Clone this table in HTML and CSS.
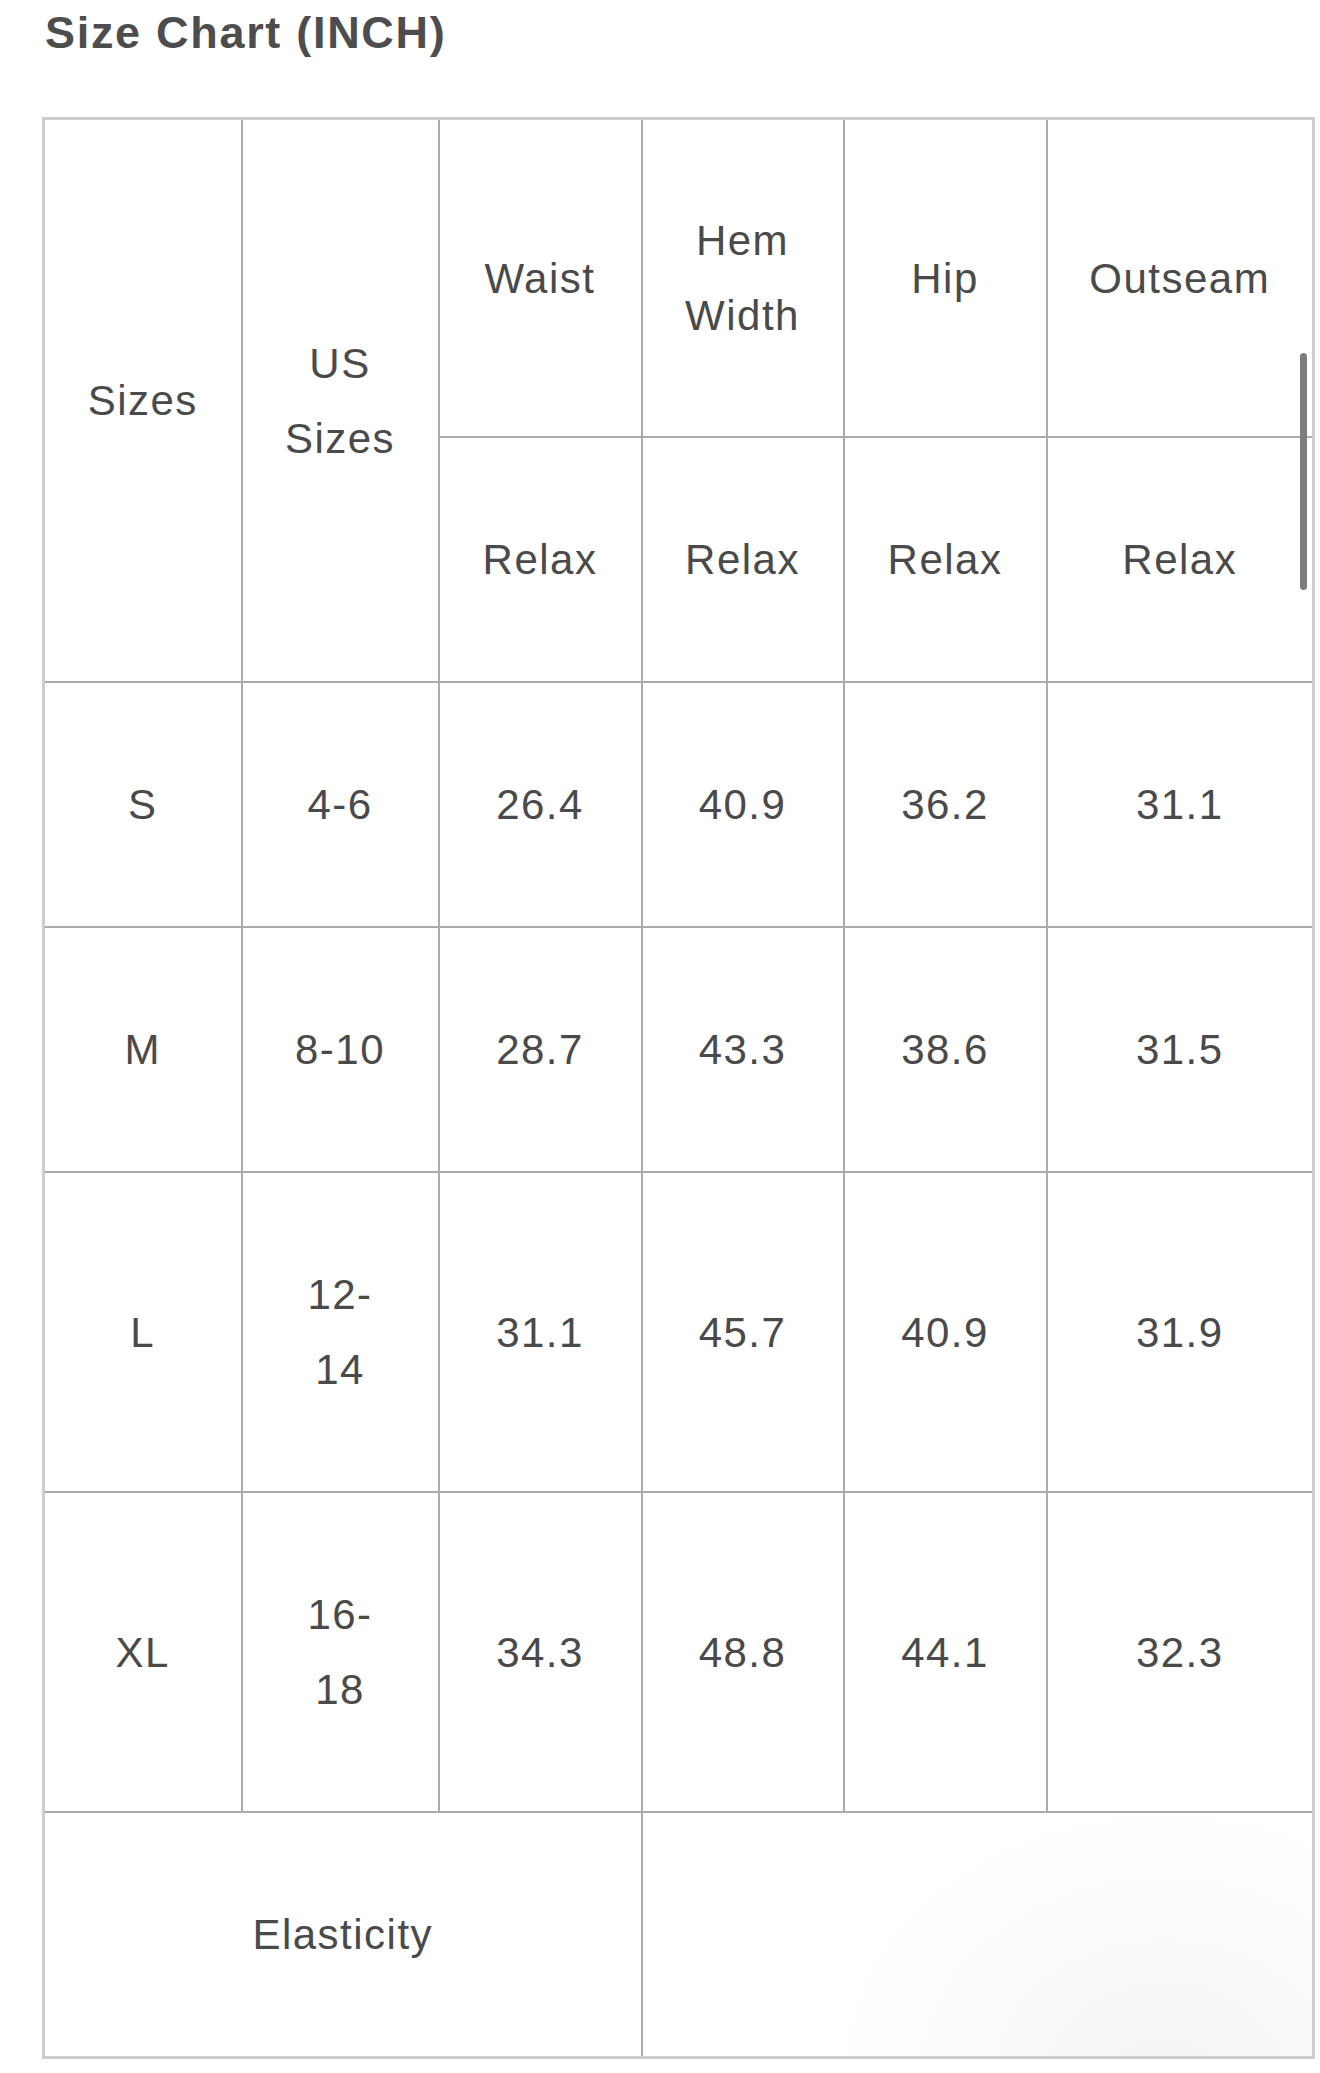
FILE: index.html
```html
<!DOCTYPE html>
<html>
<head>
<meta charset="utf-8">
<title>Size Chart</title>
<link rel="stylesheet" href="styles.css">
</head>
<body>
<div class="page">
  <h2 class="title">Size Chart (INCH)</h2>
  <div class="chart">
    <table class="size-table">
      <colgroup>
        <col class="c1"><col class="c2"><col class="c3"><col class="c4"><col class="c5"><col class="c6">
      </colgroup>
      <tbody>
        <tr class="head-top">
          <td rowspan="2">Sizes</td>
          <td rowspan="2">US<br>Sizes</td>
          <td>Waist</td>
          <td>Hem<br>Width</td>
          <td>Hip</td>
          <td>Outseam</td>
        </tr>
        <tr>
          <td>Relax</td>
          <td>Relax</td>
          <td>Relax</td>
          <td>Relax</td>
        </tr>
        <tr>
          <td>S</td><td>4-6</td><td>26.4</td><td>40.9</td><td>36.2</td><td>31.1</td>
        </tr>
        <tr>
          <td>M</td><td>8-10</td><td>28.7</td><td>43.3</td><td>38.6</td><td>31.5</td>
        </tr>
        <tr>
          <td>L</td><td>12-<br>14</td><td>31.1</td><td>45.7</td><td>40.9</td><td>31.9</td>
        </tr>
        <tr>
          <td>XL</td><td>16-<br>18</td><td>34.3</td><td>48.8</td><td>44.1</td><td>32.3</td>
        </tr>
        <tr>
          <td colspan="3">Elasticity</td>
          <td colspan="3" class="blank"></td>
        </tr>
      </tbody>
    </table>
    <div class="scrollbar"></div>
  </div>
</div>
</body>
</html>
```

FILE: styles.css
```css
html, body {
  margin: 0;
  padding: 0;
  background: #ffffff;
}

.page {
  padding: 8px 0 0 44px;
  font-family: "Liberation Sans", Arial, sans-serif;
  color: #4a4a4a;
}

.title {
  margin: 0 0 59px 1px;
  font-size: 45px;
  line-height: 50px;
  font-weight: bold;
  letter-spacing: 1.7px;
  color: #4d4d4d;
}

.chart {
  position: relative;
  width: 1270px;
  margin-left: -2px;
}

.size-table {
  width: 1270px;
  table-layout: fixed;
  border-collapse: collapse;
  border: 3px solid #cdcdcd;
}

.c1 { width: 198px; }
.c2 { width: 197px; }
.c3 { width: 203px; }
.c4 { width: 202px; }
.c5 { width: 203px; }
.c6 { width: 267px; }

.size-table td {
  border: 2px solid #ababab;
  padding: 84px 0;
  line-height: 75px;
  font-size: 42px;
  letter-spacing: 1.5px;
  text-align: center;
  vertical-align: middle;
  color: #4a4a4a;
}

.size-table .head-top td {
  padding: 83px 0;
}

.size-table td.blank {
  background: radial-gradient(ellipse 340px 280px at 78% 110%, #f3f3f3 0%, #fafafa 45%, #ffffff 100%);
}

.scrollbar {
  position: absolute;
  right: 5px;
  top: 236px;
  width: 7px;
  height: 237px;
  border-radius: 4px;
  background: #7d7d7d;
}
```
